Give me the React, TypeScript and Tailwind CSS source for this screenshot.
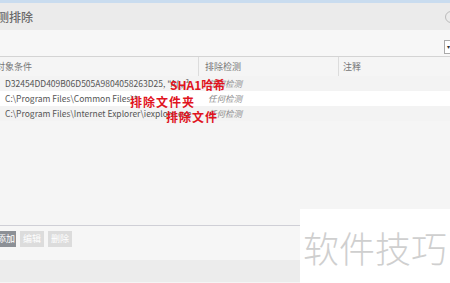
import React from "react";

const font = { fontFamily: '"Noto Sans CJK SC", "Liberation Sans", sans-serif' };

export default function App() {
  const rows = [
    { c: 'D32454DD409B06D505A9804058263D25, "A( ,,³', bg: "bg-[#f3f3f3]" },
    { c: "C:\\Program Files\\Common Files\\*", bg: "bg-white" },
    { c: "C:\\Program Files\\Internet Explorer\\iexplore.exe", bg: "bg-[#f3f3f3]" },
  ];
  return (
    <div className="relative w-[450px] h-[283px] overflow-hidden bg-[#f5f5f5]" style={font}>
      <div className="h-[3px] bg-[#c9dcef]" />
      <div className="h-[27px] bg-[#ebebeb] flex items-center justify-between">
        <span className="text-[12px] text-[#6a6a6a] -ml-[3px] font-medium">测排除</span>
        <div className="w-[12px] h-[12px] rounded-full border border-[#bbb] mr-[-7px]" />
      </div>
      <div className="h-[26px] bg-[#f7f7f7] flex justify-end items-center">
        <div className="w-[6px] h-[14px] bg-white border border-[#aaa] border-r-0 flex items-center justify-end mt-[8px]">
          <span className="text-[6px] text-[#333] leading-none">▾</span>
        </div>
      </div>
      <div className="border-t border-[#d4d4d4] h-[20px] flex text-[9px] text-[#777] bg-[#f5f5f5]">
        <div className="w-[203px] border-r border-[#dcdcdc] flex items-center -ml-[4px]">对象条件</div>
        <div className="w-[140px] border-r border-[#dcdcdc] flex items-center pl-[6px]">排除检测</div>
        <div className="flex-1 flex items-center pl-[4px]">注释</div>
      </div>
      <div className="flex flex-col">
        {rows.map((r, i) => (
          <div key={i} className={`h-[15px] flex items-center text-[8.5px] text-[#555] ${r.bg}`}>
            <div className="w-[203px] pl-[5px] whitespace-nowrap overflow-hidden">{r.c}</div>
            <div className="pl-[5px] italic text-[#8a8a8a] text-[8.5px]">任何检测</div>
          </div>
        ))}
      </div>
      <div className="absolute left-[170px] top-[79px] text-[12px] font-bold text-[#e0141e] leading-none">SHA1哈希</div>
      <div className="absolute left-[130px] top-[96px] text-[12px] font-bold text-[#e0141e] leading-none tracking-[1px]">排除文件夹</div>
      <div className="absolute left-[166px] top-[111px] text-[12px] font-bold text-[#e0141e] leading-none tracking-[1px]">排除文件</div>
      <div className="h-[104px]" />
      <div className="border-t border-[#cfcfd6] h-[35px] flex items-start pt-[5px] gap-[4px] bg-[#f6f6f6]">
        <div className="h-[16px] w-[16px] bg-[#8c9096] text-white text-[9px] flex items-center justify-end pr-[2px] overflow-hidden whitespace-nowrap">
          <span className="-mr-[1px]">添加</span>
        </div>
        <div className="h-[16px] w-[24px] bg-[#dcdcdc] text-white text-[9px] flex items-center justify-center">编辑</div>
        <div className="h-[16px] w-[24px] bg-[#dcdcdc] text-white text-[9px] flex items-center justify-center">删除</div>
      </div>
      <div className="h-[22px] bg-[#ececec]" />
      <div className="absolute left-[300px] top-[209px] w-[150px] h-[74px] bg-white flex items-center justify-center">
        <span className="text-[36px] leading-none text-[#cfcfcf] mt-[2px]" style={{ fontFamily: '"Noto Sans CJK SC", sans-serif', fontWeight: 300 }}>软件技巧</span>
      </div>
    </div>
  );
}
